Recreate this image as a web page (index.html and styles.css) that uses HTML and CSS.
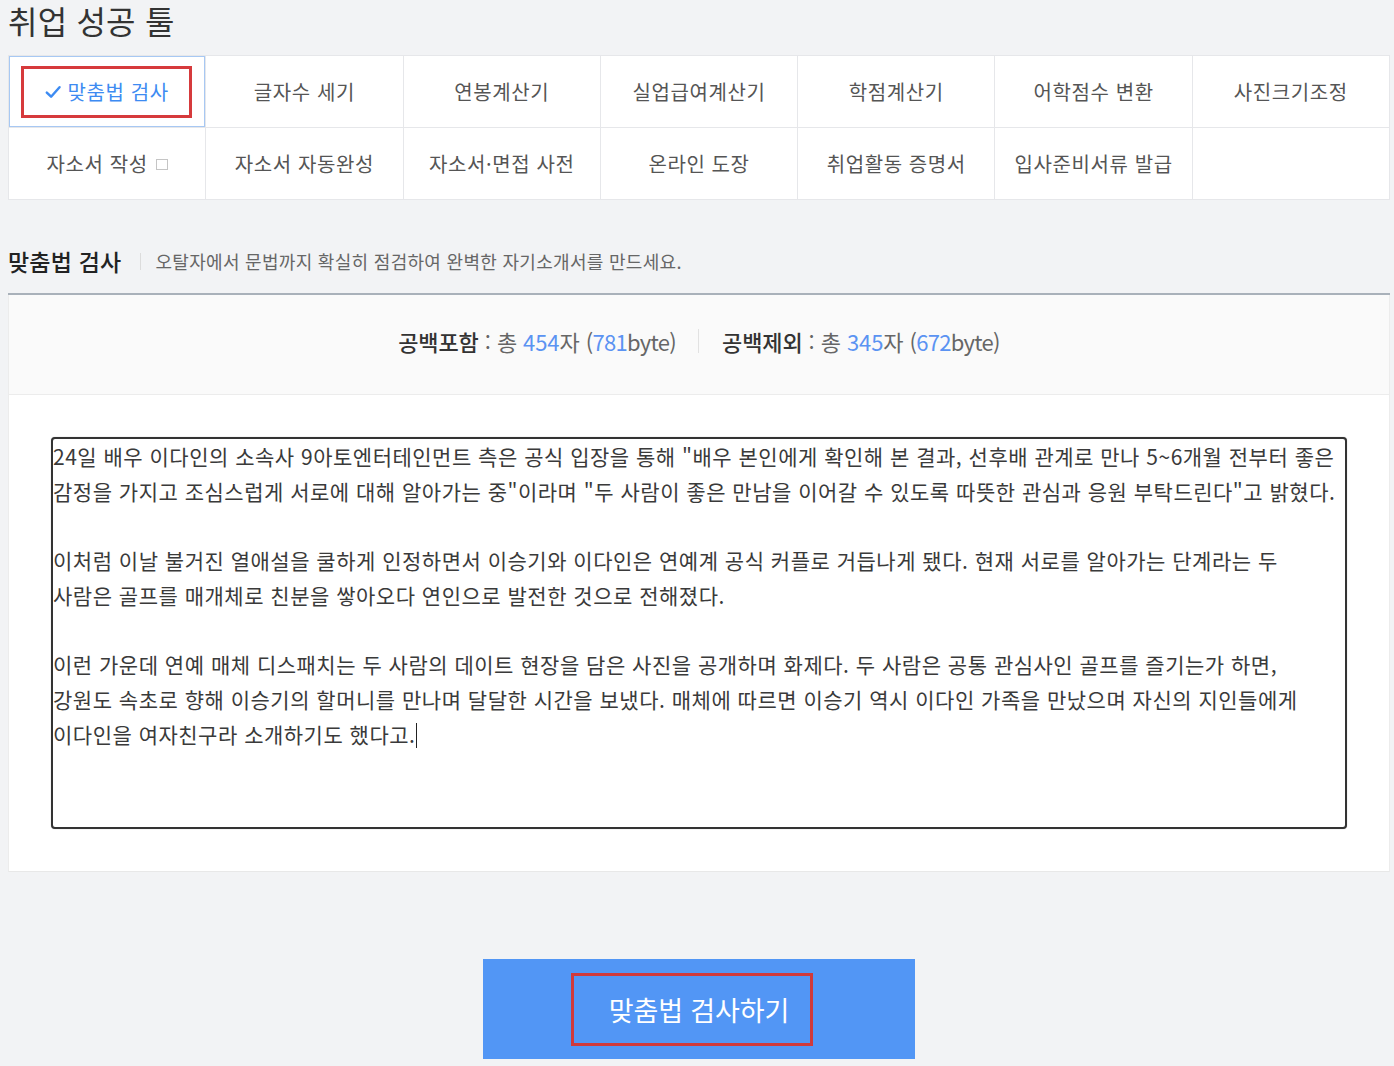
FILE: index.html
```html
<!DOCTYPE html>
<html lang="ko">
<head>
<meta charset="utf-8">
<title>취업 성공 툴</title>
<link rel="stylesheet" href="styles.css">
</head>
<body>
<div class="page">
  <h1 class="title">취업 성공 툴</h1>

  <nav class="tools">
    <a class="tool active"><span class="mark"><svg class="check" viewBox="0 0 16 16" width="18" height="18"><path d="M2.5 8.5 L6.3 12.2 L13.8 3.8" fill="none" stroke="#3d8bf2" stroke-width="2.2" stroke-linecap="round" stroke-linejoin="round"/></svg>맞춤법 검사</span></a>
    <a class="tool">글자수 세기</a>
    <a class="tool">연봉계산기</a>
    <a class="tool">실업급여계산기</a>
    <a class="tool">학점계산기</a>
    <a class="tool">어학점수 변환</a>
    <a class="tool">사진크기조정</a>
    <a class="tool">자소서 작성<span class="box-icon"></span></a>
    <a class="tool">자소서 자동완성</a>
    <a class="tool">자소서·면접 사전</a>
    <a class="tool">온라인 도장</a>
    <a class="tool">취업활동 증명서</a>
    <a class="tool">입사준비서류 발급</a>
    <a class="tool empty"></a>
  </nav>

  <div class="section-head">
    <h2 class="section-title">맞춤법 검사</h2>
    <span class="divider"></span>
    <p class="section-desc">오탈자에서 문법까지 확실히 점검하여 완벽한 자기소개서를 만드세요.</p>
  </div>

  <section class="panel">
    <div class="count">
      <div class="count-item"><b>공백포함</b><span class="sep"> : </span>총 <em>454</em>자 <span class="byte">(<em>781</em>byte)</span></div>
      <span class="count-divider"></span>
      <div class="count-item"><b>공백제외</b><span class="sep"> : </span>총 <em>345</em>자 <span class="byte">(<em>672</em>byte)</span></div>
    </div>
    <div class="editor-wrap">
      <div class="editor" role="textbox" aria-multiline="true">24일 배우 이다인의 소속사 9아토엔터테인먼트 측은 공식 입장을 통해 "배우 본인에게 확인해 본 결과, 선후배 관계로 만나 5~6개월 전부터 좋은<br>감정을 가지고 조심스럽게 서로에 대해 알아가는 중"이라며 "두 사람이 좋은 만남을 이어갈 수 있도록 따뜻한 관심과 응원 부탁드린다"고 밝혔다.<br><br>이처럼 이날 불거진 열애설을 쿨하게 인정하면서 이승기와 이다인은 연예계 공식 커플로 거듭나게 됐다. 현재 서로를 알아가는 단계라는 두<br>사람은 골프를 매개체로 친분을 쌓아오다 연인으로 발전한 것으로 전해졌다.<br><br>이런 가운데 연예 매체 디스패치는 두 사람의 데이트 현장을 담은 사진을 공개하며 화제다. 두 사람은 공통 관심사인 골프를 즐기는가 하면,<br>강원도 속초로 향해 이승기의 할머니를 만나며 달달한 시간을 보냈다. 매체에 따르면 이승기 역시 이다인 가족을 만났으며 자신의 지인들에게<br>이다인을 여자친구라 소개하기도 했다고.<span class="caret"></span></div>
    </div>
  </section>

  <div class="actions">
    <button class="submit" type="button"><span class="submit-label">맞춤법 검사하기</span></button>
  </div>
</div>
</body>
</html>
```

FILE: styles.css
```css
* { box-sizing: border-box; }

html, body {
  margin: 0;
  padding: 0;
  background: #f2f3f5;
  font-family: "Noto Sans CJK KR", "Noto Sans", sans-serif;
  color: #333;
}

.page {
  padding: 0 4px 0 8px;
  height: 1066px;
  overflow: hidden;
}

.title {
  margin: 0;
  height: 55px;
  padding-top: 1px;
  font-size: 32px;
  line-height: 38px;
  font-weight: 400;
  color: #333;
  letter-spacing: 0.2px;
}

.tools {
  display: grid;
  grid-template-columns: repeat(7, 1fr);
  grid-auto-rows: 72px;
  background: #fff;
  border-top: 1px solid #e6e7ea;
  border-left: 1px solid #e6e7ea;
}

.tool {
  display: flex;
  align-items: center;
  justify-content: center;
  border-right: 1px solid #e6e7ea;
  border-bottom: 1px solid #e6e7ea;
  font-size: 20px;
  color: #555;
  letter-spacing: 0.6px;
  text-decoration: none;
}

.tool.active {
  box-shadow: inset 0 0 0 1px #a7c8f3;
  color: #3d8bf2;
}

.mark {
  display: flex;
  align-items: center;
  justify-content: center;
  gap: 6px;
  width: 171px;
  height: 52px;
  border: 3px solid #d63a3c;
  margin-left: -2px;
}

.check { display: block; }

.box-icon {
  display: inline-block;
  width: 12px;
  height: 11px;
  border: 1px solid #c5c5c5;
  margin-left: 8px;
  position: relative;
  top: 1px;
}

.section-head {
  display: flex;
  align-items: center;
  padding: 45px 0 16px;
  border-bottom: 2px solid #a9b1ba;
}

.section-title {
  margin: 0;
  font-size: 23px;
  line-height: 32px;
  font-weight: 500;
  color: #222;
  letter-spacing: 0.2px;
}

.divider {
  width: 1px;
  height: 17px;
  background: #dcdcdc;
  margin: 0 14px 0 19px;
}

.section-desc {
  margin: 0;
  font-size: 18px;
  color: #666;
  letter-spacing: 0.3px;
}

.panel {
  background: #fff;
  border-left: 1px solid #ececec;
  border-right: 1px solid #ececec;
  border-bottom: 1px solid #e8e8e8;
}

.count {
  display: flex;
  align-items: center;
  justify-content: center;
  height: 100px;
  padding-bottom: 8px;
  background: #fafafa;
  border-bottom: 1px solid #ececec;
  font-size: 22px;
  color: #666;
  letter-spacing: -0.1px;
}

.count-item b {
  font-weight: 500;
  color: #333;
}

.count-item em {
  font-style: normal;
  color: #5b93f2;
}

.byte { letter-spacing: -0.7px; }

.count-divider {
  width: 1px;
  height: 24px;
  background: #e2e2e2;
  margin: 0 23px 0 22px;
}

.editor-wrap {
  padding: 42px 42px 42px;
}

.editor {
  height: 392px;
  border: 2px solid #333;
  border-radius: 4px;
  box-shadow: 0 0 1px rgba(0,0,0,0.4);
  background: #fff;
  padding: 0;
  font-size: 21px;
  line-height: 34.7px;
  color: #3a3a3a;
  letter-spacing: 0.5px;
  white-space: nowrap;
  overflow: hidden;
}

.caret {
  display: inline-block;
  width: 1px;
  height: 25px;
  background: #222;
  vertical-align: -5px;
  margin-left: 1px;
}

.actions {
  display: flex;
  justify-content: center;
  padding-top: 87px;
}

.submit {
  width: 432px;
  height: 100px;
  border: 0;
  background: #5296f5;
  display: flex;
  align-items: center;
  justify-content: center;
  padding: 0 14px 0 0;
  font-family: inherit;
  cursor: pointer;
}

.submit-label {
  display: flex;
  align-items: center;
  justify-content: center;
  width: 242px;
  height: 73px;
  border: 3px solid #d0393b;
  padding-left: 14px;
  color: #fff;
  font-size: 27px;
  letter-spacing: -0.1px;
}
```
